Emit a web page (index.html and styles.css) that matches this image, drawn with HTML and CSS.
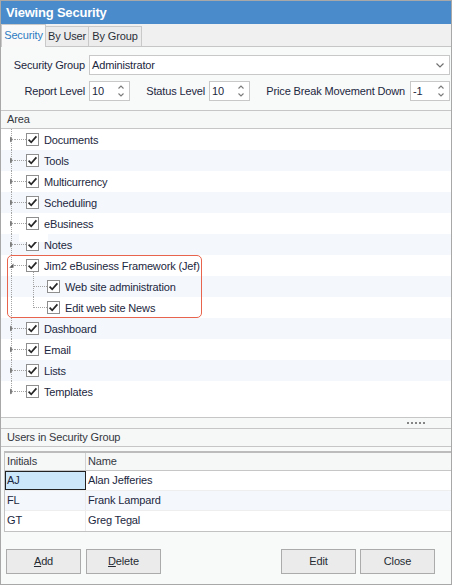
FILE: index.html
```html
<!DOCTYPE html>
<html>
<head>
<meta charset="utf-8">
<title>Viewing Security</title>
<link rel="stylesheet" href="styles.css">
</head>
<body>
<div class="window">
  <div class="titlebar">Viewing Security</div>
  <div class="tabs">
    <div class="tab active">Security</div>
    <div class="tab t2">By User</div>
    <div class="tab t3">By Group</div>
  </div>
  <div class="form">
    <div class="frow">
      <div class="flabel w-sg">Security Group</div>
      <div class="combo"><span class="ctext">Administrator</span>
        <svg class="chev" width="8" height="5" viewBox="0 0 8 5"><path d="M0.5 0.5 L4 4 L7.5 0.5" fill="none" stroke="#707070" stroke-width="1.2"/></svg>
      </div>
    </div>
    <div class="frow r2">
      <div class="flabel w-rl">Report Level</div>
      <div class="spin s41"><span class="stext">10</span>
        <svg class="arrows" width="6" height="12" viewBox="0 0 6 12"><path d="M0.5 3.5 L3 1 L5.5 3.5 M0.5 8.5 L3 11 L5.5 8.5" fill="none" stroke="#7a7a7a" stroke-width="1.1"/></svg>
      </div>
      <div class="flabel w-sl">Status Level</div>
      <div class="spin s41"><span class="stext">10</span>
        <svg class="arrows" width="6" height="12" viewBox="0 0 6 12"><path d="M0.5 3.5 L3 1 L5.5 3.5 M0.5 8.5 L3 11 L5.5 8.5" fill="none" stroke="#7a7a7a" stroke-width="1.1"/></svg>
      </div>
      <div class="flabel w-pb">Price Break Movement Down</div>
      <div class="spin s40"><span class="stext">-1</span>
        <svg class="arrows" width="6" height="12" viewBox="0 0 6 12"><path d="M0.5 3.5 L3 1 L5.5 3.5 M0.5 8.5 L3 11 L5.5 8.5" fill="none" stroke="#7a7a7a" stroke-width="1.1"/></svg>
      </div>
    </div>
  </div>

  <div class="area">
    <div class="ph">Area</div>
    <div class="tree">
      <div class="node"><svg class="exp" width="5" height="7" viewBox="0 0 5 7"><polygon points="1,0.5 4,3.5 1,6.5" fill="#7c7c7c"/></svg><span class="conn"></span><svg class="cb" width="13" height="13" viewBox="0 0 13 13"><rect x="0.5" y="0.5" width="12" height="12" fill="#fff" stroke="#8e8e8e"/><path d="M2.6 6.6 L5.2 9.3 L10.4 3.4" fill="none" stroke="#262626" stroke-width="1.7"/></svg><span class="lbl">Documents</span></div>
      <div class="node alt"><svg class="exp" width="5" height="7" viewBox="0 0 5 7"><polygon points="1,0.5 4,3.5 1,6.5" fill="#7c7c7c"/></svg><span class="conn"></span><svg class="cb" width="13" height="13" viewBox="0 0 13 13"><rect x="0.5" y="0.5" width="12" height="12" fill="#fff" stroke="#8e8e8e"/><path d="M2.6 6.6 L5.2 9.3 L10.4 3.4" fill="none" stroke="#262626" stroke-width="1.7"/></svg><span class="lbl">Tools</span></div>
      <div class="node"><svg class="exp" width="5" height="7" viewBox="0 0 5 7"><polygon points="1,0.5 4,3.5 1,6.5" fill="#7c7c7c"/></svg><span class="conn"></span><svg class="cb" width="13" height="13" viewBox="0 0 13 13"><rect x="0.5" y="0.5" width="12" height="12" fill="#fff" stroke="#8e8e8e"/><path d="M2.6 6.6 L5.2 9.3 L10.4 3.4" fill="none" stroke="#262626" stroke-width="1.7"/></svg><span class="lbl">Multicurrency</span></div>
      <div class="node alt"><svg class="exp" width="5" height="7" viewBox="0 0 5 7"><polygon points="1,0.5 4,3.5 1,6.5" fill="#7c7c7c"/></svg><span class="conn"></span><svg class="cb" width="13" height="13" viewBox="0 0 13 13"><rect x="0.5" y="0.5" width="12" height="12" fill="#fff" stroke="#8e8e8e"/><path d="M2.6 6.6 L5.2 9.3 L10.4 3.4" fill="none" stroke="#262626" stroke-width="1.7"/></svg><span class="lbl">Scheduling</span></div>
      <div class="node"><svg class="exp" width="5" height="7" viewBox="0 0 5 7"><polygon points="1,0.5 4,3.5 1,6.5" fill="#7c7c7c"/></svg><span class="conn"></span><svg class="cb" width="13" height="13" viewBox="0 0 13 13"><rect x="0.5" y="0.5" width="12" height="12" fill="#fff" stroke="#8e8e8e"/><path d="M2.6 6.6 L5.2 9.3 L10.4 3.4" fill="none" stroke="#262626" stroke-width="1.7"/></svg><span class="lbl">eBusiness</span></div>
      <div class="node alt glitchrow"><svg class="exp" width="5" height="7" viewBox="0 0 5 7"><polygon points="1,0.5 4,3.5 1,6.5" fill="#7c7c7c"/></svg><span class="conn"></span><svg class="cb" width="13" height="13" viewBox="0 0 13 13"><rect x="0.5" y="0.5" width="12" height="12" fill="#fff" stroke="#8e8e8e"/><path d="M2.6 6.6 L5.2 9.3 L10.4 3.4" fill="none" stroke="#262626" stroke-width="1.7"/></svg><span class="lbl">Notes</span><span class="glitch"></span></div>
      <div class="group">
        <div class="node open"><svg class="exp" width="5" height="7" viewBox="0 0 5 7"><polygon points="4.5,1.5 4.5,5.8 0.2,5.8" fill="#5a5a5a"/></svg><span class="conn"></span><svg class="cb" width="13" height="13" viewBox="0 0 13 13"><rect x="0.5" y="0.5" width="12" height="12" fill="#fff" stroke="#8e8e8e"/><path d="M2.6 6.6 L5.2 9.3 L10.4 3.4" fill="none" stroke="#262626" stroke-width="1.7"/></svg><span class="lbl">Jim2 eBusiness Framework (Jef)</span></div>
        <div class="node alt child mid"><span class="conn c2"></span><svg class="cb" width="13" height="13" viewBox="0 0 13 13"><rect x="0.5" y="0.5" width="12" height="12" fill="#fff" stroke="#8e8e8e"/><path d="M2.6 6.6 L5.2 9.3 L10.4 3.4" fill="none" stroke="#262626" stroke-width="1.7"/></svg><span class="lbl">Web site administration</span></div>
        <div class="node child end"><span class="conn c2"></span><svg class="cb" width="13" height="13" viewBox="0 0 13 13"><rect x="0.5" y="0.5" width="12" height="12" fill="#fff" stroke="#8e8e8e"/><path d="M2.6 6.6 L5.2 9.3 L10.4 3.4" fill="none" stroke="#262626" stroke-width="1.7"/></svg><span class="lbl">Edit web site News</span></div>
      </div>
      <div class="node alt"><svg class="exp" width="5" height="7" viewBox="0 0 5 7"><polygon points="1,0.5 4,3.5 1,6.5" fill="#7c7c7c"/></svg><span class="conn"></span><svg class="cb" width="13" height="13" viewBox="0 0 13 13"><rect x="0.5" y="0.5" width="12" height="12" fill="#fff" stroke="#8e8e8e"/><path d="M2.6 6.6 L5.2 9.3 L10.4 3.4" fill="none" stroke="#262626" stroke-width="1.7"/></svg><span class="lbl">Dashboard</span></div>
      <div class="node"><svg class="exp" width="5" height="7" viewBox="0 0 5 7"><polygon points="1,0.5 4,3.5 1,6.5" fill="#7c7c7c"/></svg><span class="conn"></span><svg class="cb" width="13" height="13" viewBox="0 0 13 13"><rect x="0.5" y="0.5" width="12" height="12" fill="#fff" stroke="#8e8e8e"/><path d="M2.6 6.6 L5.2 9.3 L10.4 3.4" fill="none" stroke="#262626" stroke-width="1.7"/></svg><span class="lbl">Email</span></div>
      <div class="node alt"><svg class="exp" width="5" height="7" viewBox="0 0 5 7"><polygon points="1,0.5 4,3.5 1,6.5" fill="#7c7c7c"/></svg><span class="conn"></span><svg class="cb" width="13" height="13" viewBox="0 0 13 13"><rect x="0.5" y="0.5" width="12" height="12" fill="#fff" stroke="#8e8e8e"/><path d="M2.6 6.6 L5.2 9.3 L10.4 3.4" fill="none" stroke="#262626" stroke-width="1.7"/></svg><span class="lbl">Lists</span></div>
      <div class="node last"><svg class="exp" width="5" height="7" viewBox="0 0 5 7"><polygon points="1,0.5 4,3.5 1,6.5" fill="#7c7c7c"/></svg><span class="conn"></span><svg class="cb" width="13" height="13" viewBox="0 0 13 13"><rect x="0.5" y="0.5" width="12" height="12" fill="#fff" stroke="#8e8e8e"/><path d="M2.6 6.6 L5.2 9.3 L10.4 3.4" fill="none" stroke="#262626" stroke-width="1.7"/></svg><span class="lbl">Templates</span></div>
    </div>
    <div class="splitter"><span class="dots"></span></div>
    <div class="ph">Users in Security Group</div>
  </div>

  <div class="gap"></div>
  <div class="grid">
    <div class="grow ghead"><div class="c1">Initials</div><div class="c2">Name</div></div>
    <div class="grow"><div class="c1 sel">AJ</div><div class="c2">Alan Jefferies</div></div>
    <div class="grow alt"><div class="c1">FL</div><div class="c2">Frank Lampard</div></div>
    <div class="grow"><div class="c1">GT</div><div class="c2">Greg Tegal</div></div>
  </div>

  <div class="buttons">
    <div class="btn"><u>A</u>dd</div>
    <div class="btn b-del"><u>D</u>elete</div>
    <div class="btn b-edit">Edit</div>
    <div class="btn b-close">Close</div>
  </div>
</div>
</body>
</html>
```

FILE: styles.css
```css
* { box-sizing: border-box; }

body {
  margin: 0;
  font-family: "Liberation Sans", Arial, sans-serif;
  font-size: 11px;
  letter-spacing: -0.15px;
  color: #1c2740;
  background: #ffffff;
}

.window {
  width: 452px;
  height: 585px;
  border: 1px solid #a8a8a8;
  background: #f8f9f9;
  display: flex;
  flex-direction: column;
  overflow: hidden;
}

.titlebar {
  flex: none;
  height: 23px;
  background: #4a8bcb;
  color: #ffffff;
  font-weight: bold;
  font-size: 13px;
  letter-spacing: -0.2px;
  line-height: 23px;
  padding-left: 5px;
}

/* tabs */
.tabs {
  flex: none;
  height: 23px;
  display: flex;
  align-items: flex-end;
  background: #f0f0f0;
  border-bottom: 1px solid #c6c6c6;
}
.tab {
  height: 20px;
  line-height: 18px;
  text-align: center;
  border: 1px solid #c9c9c9;
  border-bottom: none;
  background: #ececec;
  color: #2a2f38;
  margin-left: -1px;
}
.tab.active {
  position: relative;
  z-index: 1;
  width: 45px;
  height: 23px;
  line-height: 21px;
  margin-left: 0;
  margin-bottom: -1px;
  background: #f9f9f9;
  color: #2d7bc2;
}
.tab.t2 { width: 44px; }
.tab.t3 { width: 54px; }

/* form */
.form {
  flex: none;
  height: 63px;
  padding-top: 8px;
}
.frow {
  display: flex;
  align-items: center;
  height: 20px;
}
.frow.r2 { margin-top: 6px; }
.flabel {
  text-align: right;
  padding-right: 4px;
  white-space: nowrap;
}
.w-sg { width: 88px; }
.w-rl { width: 88px; }
.w-sl { width: 79px; }
.w-pb { width: 160px; padding-right: 5px; }

.combo {
  flex: 1;
  height: 20px;
  margin-right: 1px;
  border: 1px solid #c8c8c8;
  background: #ffffff;
  display: flex;
  align-items: center;
  padding-left: 2px;
}
.combo .chev { margin-left: auto; margin-right: 5px; }

.spin {
  height: 20px;
  border: 1px solid #c8c8c8;
  background: #ffffff;
  display: flex;
  align-items: center;
  padding-left: 2px;
}
.s41 { width: 41px; }
.s40 { width: 40px; }
.spin .arrows { margin-left: auto; margin-right: 5px; }

/* area panel */
.area {
  flex: none;
  border-top: 1px solid #c6c6c6;
}
.ph {
  height: 18px;
  line-height: 17px;
  padding-left: 6px;
  background: #f6f7f7;
  border-bottom: 1px solid #c6c6c6;
  color: #34383f;
}

.tree {
  height: 288px;
  background: #ffffff;
}

.node {
  position: relative;
  height: 21px;
  display: flex;
  align-items: center;
  padding-left: 8px;
  background:
    repeating-linear-gradient(to bottom, #a4a4a4 0 1px, transparent 1px 2px) 10px 0 / 1px 100% no-repeat,
    #ffffff;
}
.node.alt {
  background:
    repeating-linear-gradient(to bottom, #a4a4a4 0 1px, transparent 1px 2px) 10px 0 / 1px 100% no-repeat,
    #f4f8fd;
}
.node.last {
  background:
    repeating-linear-gradient(to bottom, #a4a4a4 0 1px, transparent 1px 2px) 10px 0 / 1px 14px no-repeat,
    #ffffff;
}
.node.open {
  background:
    repeating-linear-gradient(to bottom, #a4a4a4 0 1px, transparent 1px 2px) 10px 0 / 1px 100% no-repeat,
    repeating-linear-gradient(to bottom, #a4a4a4 0 1px, transparent 1px 2px) 32px 17px / 1px 4px no-repeat,
    #ffffff;
}
.node.child { padding-left: 33px; }
.node.child.mid {
  background:
    repeating-linear-gradient(to bottom, #a4a4a4 0 1px, transparent 1px 2px) 10px 0 / 1px 100% no-repeat,
    repeating-linear-gradient(to bottom, #a4a4a4 0 1px, transparent 1px 2px) 32px 0 / 1px 100% no-repeat,
    #f4f8fd;
}
.node.child.end {
  background:
    repeating-linear-gradient(to bottom, #a4a4a4 0 1px, transparent 1px 2px) 10px 0 / 1px 100% no-repeat,
    repeating-linear-gradient(to bottom, #a4a4a4 0 1px, transparent 1px 2px) 32px 0 / 1px 11px no-repeat,
    #ffffff;
}

.exp { flex: none; display: block; }
.conn {
  flex: none;
  width: 12px;
  height: 0;
  border-top: 1px dotted #a4a4a4;
}
.conn.c2 { width: 13px; }
.cb { flex: none; display: block; }
.lbl {
  margin-left: 5px;
  white-space: nowrap;
}

.group { position: relative; }
.group::after {
  content: "";
  position: absolute;
  left: 6px;
  top: 0;
  width: 193px;
  bottom: 0;
  border: 1.5px solid #e8644c;
  border-radius: 5px;
  pointer-events: none;
}

.glitch {
  position: absolute;
  left: 18px;
  top: 0;
  width: 29px;
  height: 8px;
  background: #ffffff;
}

.splitter {
  height: 12px;
  border-top: 1px solid #c6c6c6;
  border-bottom: 1px solid #c6c6c6;
  background: #f6f7f7;
  display: flex;
  justify-content: flex-end;
  padding-right: 26px;
}
.dots {
  width: 18px;
  height: 2px;
  margin-top: 4px;
  background: repeating-linear-gradient(to right, #858585 0 2px, transparent 2px 4px);
}

.gap { flex: none; height: 4px; }

/* grid */
.grid {
  flex: none;
  margin-left: 3px;
  border-top: 2px solid #bcbcbc;
  border-left: 1px solid #c2c2c2;
  border-bottom: 1px solid #c2c2c2;
  background: #ffffff;
}
.grow {
  display: flex;
  height: 20px;
  line-height: 19px;
  border-bottom: 1px solid #eeeeee;
}
.grow.alt { background: #f4f8fd; }
.grow.ghead {
  height: 18px;
  line-height: 17px;
  background: #f6f7f7;
  border-bottom: 1px solid #c6c6c6;
  color: #34383f;
}
.c1 {
  width: 81px;
  padding-left: 2px;
  border-right: 1px solid #ececec;
}
.ghead .c1 { border-right: 1px solid #d2d2d2; }
.c2 { padding-left: 2px; }
.c1.sel {
  background: #cce7fa;
  border: 1px solid #222222;
  padding-left: 1px;
  line-height: 17px;
}
.grow:last-child { border-bottom: none; }

/* buttons */
.buttons {
  flex: 1;
  display: flex;
  padding: 17px 16px 0 5px;
}
.btn {
  width: 75px;
  height: 25px;
  line-height: 23px;
  text-align: center;
  border: 1px solid #ababab;
  background: #ebebeb;
  color: #262b33;
}
.btn u { text-decoration: underline; }
.b-del { margin-left: 5px; }
.b-edit { margin-left: auto; }
.b-close { margin-left: 4px; }
```
